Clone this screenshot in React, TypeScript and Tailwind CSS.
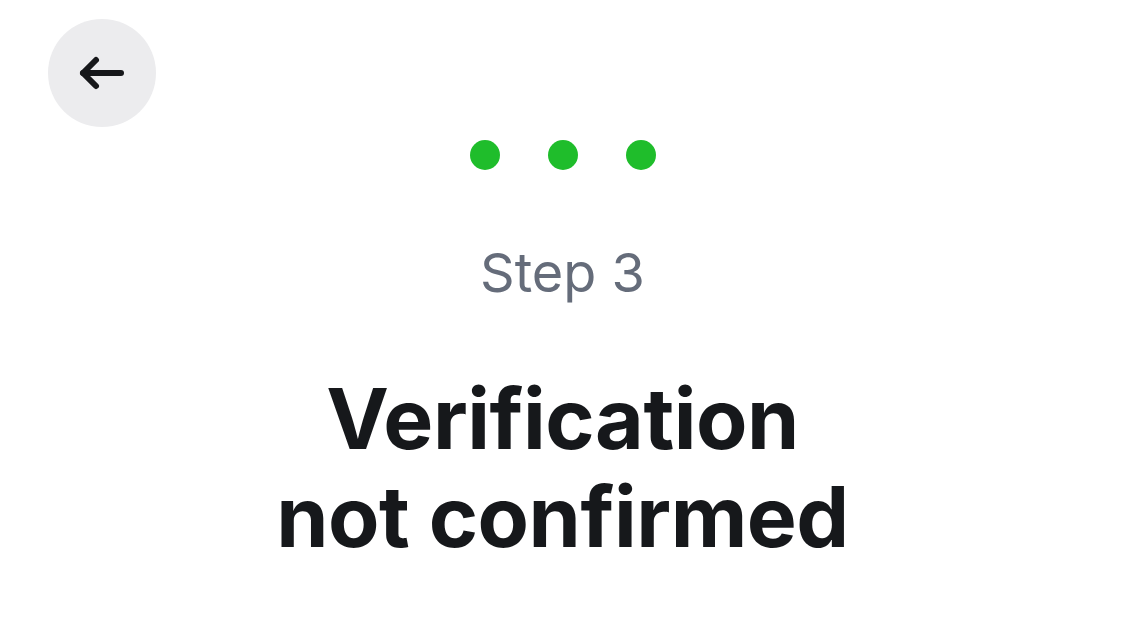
export default function App() {
  return (
    <div className="min-h-screen w-full bg-white flex flex-col" style={{ fontFamily: 'Inter, "Noto Sans", sans-serif' }}>
      <div className="pt-[19px] pl-[48px]">
        <button className="w-[108px] h-[108px] rounded-full bg-[#ececee] flex items-center justify-center">
          <svg width="48" height="36" viewBox="0 0 48 36" fill="none" stroke="#16171a" strokeWidth="6" strokeLinecap="round" strokeLinejoin="round">
            <path d="M5 18H43" />
            <path d="M18 5L5 18L18 31" />
          </svg>
        </button>
      </div>

      <div className="flex justify-center gap-[48px] mt-[13px]">
        <span className="w-[30px] h-[30px] rounded-full bg-[#1fbd2b]" />
        <span className="w-[30px] h-[30px] rounded-full bg-[#1fbd2b]" />
        <span className="w-[30px] h-[30px] rounded-full bg-[#1fbd2b]" />
      </div>

      <p className="mt-[76px] text-center text-[54px] leading-none text-[#656c7a]">Step 3</p>

      <h1 className="mt-[70px] text-center text-[84px] leading-[98px] font-bold text-[#16181b] tracking-[-0.5px]">
        Verification
        <br />
        not confirmed
      </h1>
    </div>
  );
}
